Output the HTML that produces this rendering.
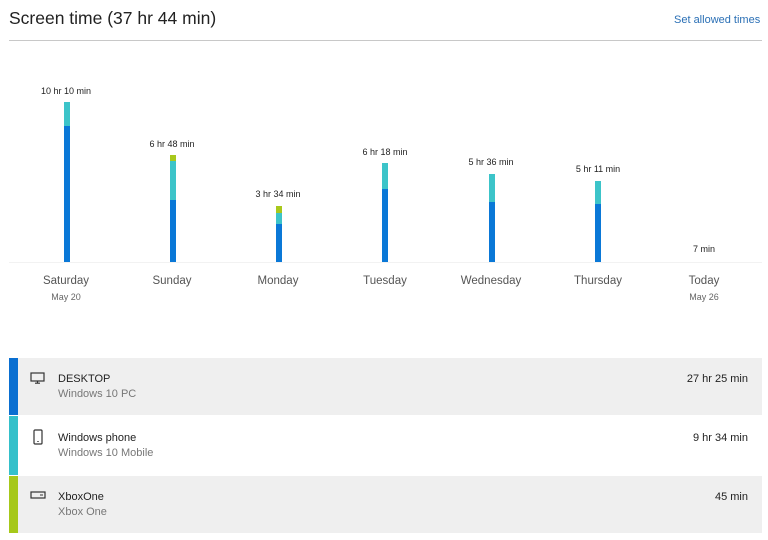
<!DOCTYPE html>
<html><head><style>
body{margin:0;width:768px;height:540px;background:#fff;font-family:"Liberation Sans",sans-serif;position:relative;overflow:hidden;color:#222}
.a{position:absolute}
.lbl{position:absolute;font-size:9px;color:#222;width:100px;text-align:center;white-space:nowrap}
.day{position:absolute;font-size:11.5px;color:#555;width:100px;text-align:center;top:275px}
.dt{position:absolute;font-size:9px;color:#666;width:100px;text-align:center;top:292px}
.b{position:absolute;width:6px}
.blue{background:#0a78d7}.teal{background:#3cc4c9}.lime{background:#a8c81c}
.row{position:absolute;left:9px;width:753px;height:57px}
.row .s{position:absolute;left:0;top:0;width:9px;height:100%}
.n{position:absolute;left:49px;top:14px;font-size:11px;color:#222}
.sub{position:absolute;left:49px;top:30px;font-size:11px;color:#777}
.t{position:absolute;right:14px;top:14px;font-size:11px;color:#222}
</style></head><body>
<div class="a" style="left:9px;top:8px;font-size:17.5px;color:#222">Screen time (37 hr 44 min)</div>
<div class="a" style="left:674px;top:14px;font-size:11px;color:#2a6fb5">Set allowed times</div>
<div class="a" style="left:9px;top:40px;width:753px;height:1px;background:#c8c8c8"></div>
<div class="a" style="left:9px;top:262px;width:753px;height:1px;background:#f2f2f2"></div>

<div class="lbl" style="left:16px;top:86px">10 hr 10 min</div>
<div class="b teal" style="left:64px;top:102px;height:24px"></div>
<div class="b blue" style="left:64px;top:126px;height:136px"></div>

<div class="lbl" style="left:122px;top:139px">6 hr 48 min</div>
<div class="b lime" style="left:170px;top:155px;height:6px"></div>
<div class="b teal" style="left:170px;top:161px;height:39px"></div>
<div class="b blue" style="left:170px;top:200px;height:62px"></div>

<div class="lbl" style="left:228px;top:189px">3 hr 34 min</div>
<div class="b lime" style="left:276px;top:206px;height:7px"></div>
<div class="b teal" style="left:276px;top:213px;height:11px"></div>
<div class="b blue" style="left:276px;top:224px;height:38px"></div>

<div class="lbl" style="left:335px;top:147px">6 hr 18 min</div>
<div class="b teal" style="left:382px;top:163px;height:26px"></div>
<div class="b blue" style="left:382px;top:189px;height:73px"></div>

<div class="lbl" style="left:441px;top:157px">5 hr 36 min</div>
<div class="b teal" style="left:489px;top:174px;height:28px"></div>
<div class="b blue" style="left:489px;top:202px;height:60px"></div>

<div class="lbl" style="left:548px;top:164px">5 hr 11 min</div>
<div class="b teal" style="left:595px;top:181px;height:23px"></div>
<div class="b blue" style="left:595px;top:204px;height:58px"></div>

<div class="lbl" style="left:654px;top:244px">7 min</div>

<div class="day" style="left:16px">Saturday</div><div class="dt" style="left:16px">May 20</div>
<div class="day" style="left:122px">Sunday</div>
<div class="day" style="left:228px">Monday</div>
<div class="day" style="left:335px">Tuesday</div>
<div class="day" style="left:441px">Wednesday</div>
<div class="day" style="left:548px">Thursday</div>
<div class="day" style="left:654px">Today</div><div class="dt" style="left:654px">May 26</div>

<div class="row" style="top:358px;background:#efefef"><div class="s" style="background:#0a6fd1"></div>
<svg class="a" style="left:21px;top:14px" width="16" height="12" viewBox="0 0 16 12"><rect x="1" y="1" width="13" height="8" fill="none" stroke="#333" stroke-width="1.2"/><path d="M7.5 9v2M5 11.2h5" stroke="#333" stroke-width="1.2"/></svg>
<div class="n" style="top:15px">DESKTOP</div><div class="sub" style="top:30px">Windows 10 PC</div><div class="t" style="top:15px">27 hr 25 min</div></div>

<div class="row" style="top:416px;background:#fff;height:59px"><div class="s" style="background:#34c0ca"></div>
<svg class="a" style="left:24px;top:13px" width="10" height="16" viewBox="0 0 10 16"><rect x="1" y="1" width="8" height="14" rx="1" fill="none" stroke="#333" stroke-width="1.2"/><rect x="4.3" y="12" width="1.4" height="1" fill="#333"/></svg>
<div class="n" style="top:16px">Windows phone</div><div class="sub" style="top:31px">Windows 10 Mobile</div><div class="t" style="top:16px">9 hr 34 min</div></div>

<div class="row" style="top:476px;background:#efefef"><div class="s" style="background:#a6c81a"></div>
<svg class="a" style="left:21px;top:15px" width="16" height="8" viewBox="0 0 16 8"><rect x="1" y="1" width="14" height="6" fill="none" stroke="#333" stroke-width="1.2"/><path d="M10 4h3" stroke="#333" stroke-width="1"/></svg>
<div class="n" style="top:15px">XboxOne</div><div class="sub" style="top:30px">Xbox One</div><div class="t" style="top:15px">45 min</div></div>
</body></html>
